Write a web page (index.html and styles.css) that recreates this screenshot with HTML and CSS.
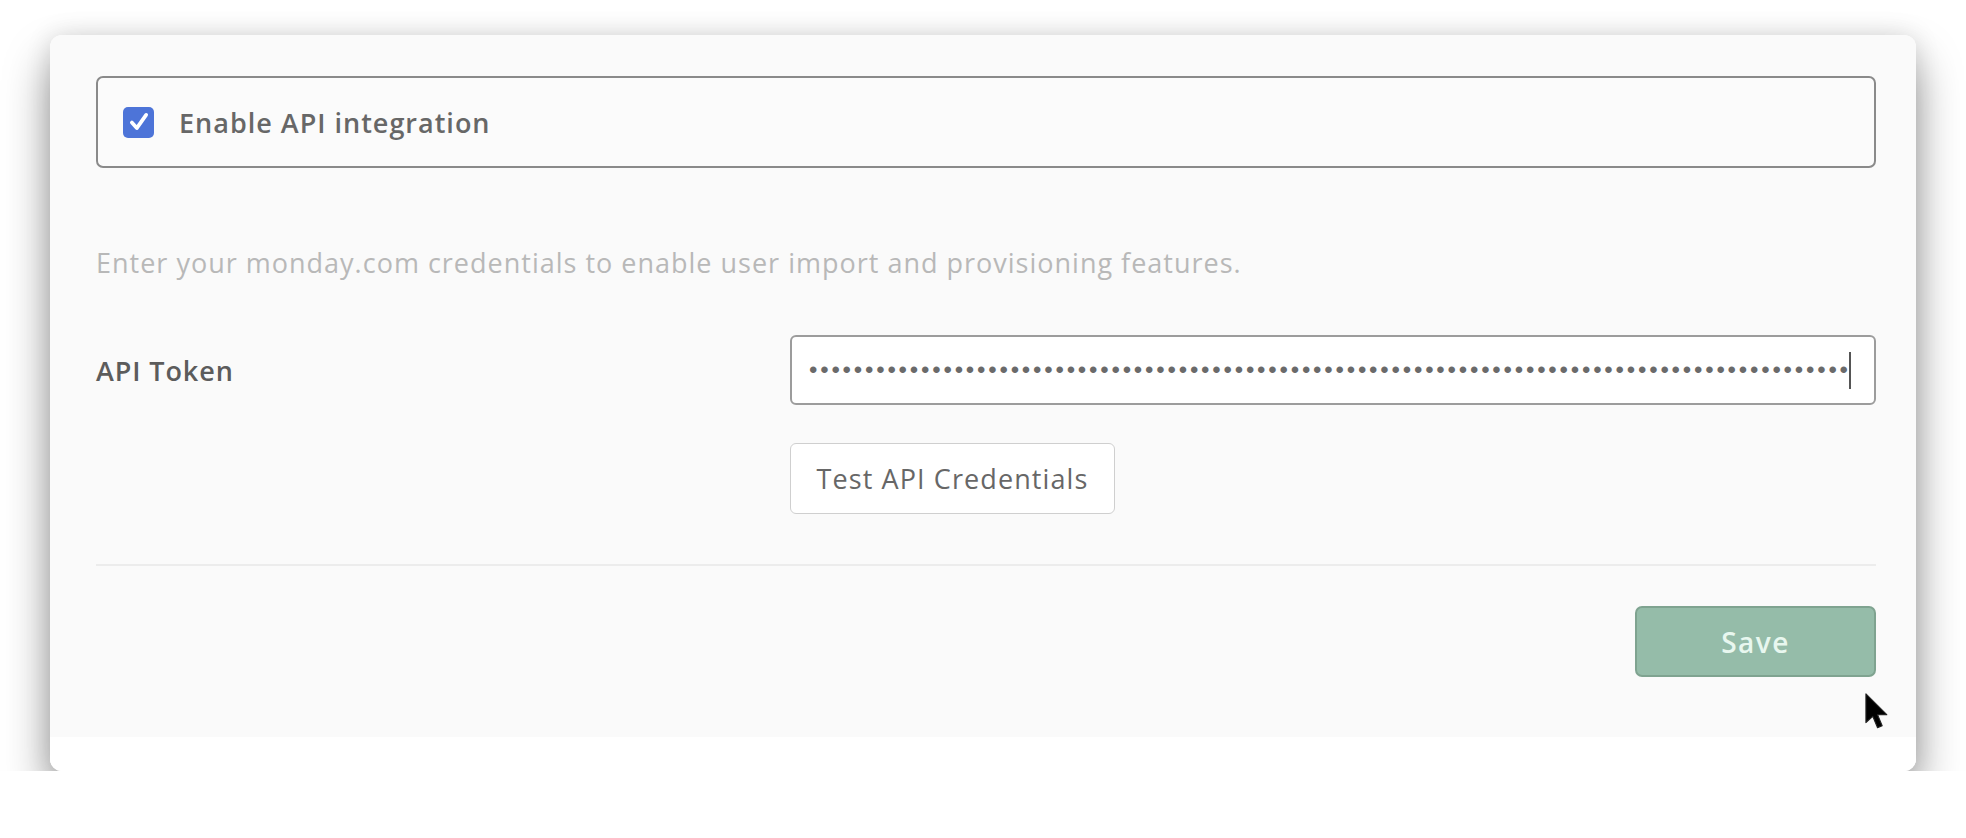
FILE: index.html
```html
<!DOCTYPE html>
<html lang="en">
<head>
    <meta charset="UTF-8">
    <title>API Integration Settings</title>
    <link rel="stylesheet" href="styles.css">
</head>
<body>
    <div class="card">
        <div class="card-body">
            <label class="enable-box">
                <span class="checkbox">
                    <svg width="22" height="22" viewBox="0 0 20 20" fill="none" stroke="#fff" stroke-width="3.4" stroke-linecap="round" stroke-linejoin="round">
                        <polyline points="3.5 10.5 8 15.5 16.5 3.5"></polyline>
                    </svg>
                </span>
                <span class="enable-label">Enable API integration</span>
            </label>

            <p class="hint">Enter your monday.com credentials to enable user import and provisioning features.</p>

            <div class="form-row">
                <div class="field-label">API Token</div>
                <div class="field-col">
                    <div class="field">
                        <span class="dots" id="dots"></span><span class="caret"></span>
                    </div>
                    <button class="btn-secondary">Test API Credentials</button>
                </div>
            </div>

            <div class="divider"></div>

            <div class="actions">
                <button class="btn-save">Save</button>
            </div>
        </div>
        <div class="card-foot"></div>

        <svg class="pointer" width="24" height="37" viewBox="0 0 13 20">
            <path d="M0.5 0.5 L0.5 16 L4.2 12.6 L6.8 18.8 L9.3 17.7 L6.8 11.7 L11.8 11.7 Z" fill="#000" stroke="#222" stroke-width="0.6" stroke-linejoin="round"></path>
        </svg>
    </div>

    <script src="script.js"></script>
</body>
</html>
```

FILE: styles.css
```css
body {
    margin: 0;
    background: #fff;
    font-family: "Open Sans", Lato, Arial, sans-serif;
}
.card {
    position: relative;
    margin: 35px 50px 0;
    border-radius: 12px;
    background: #fff;
    overflow: hidden;
    box-shadow: 0 26px 46px rgba(0, 0, 0, 0.4), 0 0 26px rgba(0, 0, 0, 0.12);
}
.card-body {
    background: #fafafa;
    padding: 41px 40px 60px 46px;
}
.card-foot {
    height: 34px;
    background: #fff;
}
.enable-box {
    display: flex;
    align-items: center;
    gap: 25px;
    height: 88px;
    padding-left: 25px;
    border: 2px solid #8a8a8a;
    border-radius: 7px;
    background: #fbfbfb;
}
.checkbox {
    width: 31px;
    height: 31px;
    border-radius: 5px;
    background: #4d74d8;
    display: flex;
    align-items: center;
    justify-content: center;
}
.enable-label {
    font-size: 27px;
    font-weight: 600;
    letter-spacing: 1px;
    color: #676767;
}
.hint {
    margin: 77px 0 0;
    font-size: 27px;
    line-height: 36px;
    letter-spacing: 1px;
    color: #b8b8b8;
}
.form-row {
    display: grid;
    grid-template-columns: 694px 1fr;
    margin-top: 54px;
}
.field-label {
    height: 70px;
    display: flex;
    align-items: center;
    font-size: 27px;
    font-weight: 600;
    letter-spacing: 0.9px;
    color: #5c5c5c;
}
.field {
    height: 66px;
    display: flex;
    align-items: center;
    padding-left: 17px;
    border: 2px solid #9c9c9c;
    border-radius: 6px;
    background: #fff;
    overflow: hidden;
}
.dots {
    font-family: "Liberation Sans", Arial, sans-serif;
    font-size: 24px;
    letter-spacing: 2.8px;
    color: #6a6a6a;
    white-space: nowrap;
}
.caret {
    display: inline-block;
    width: 2px;
    height: 37px;
    margin-left: -2px;
    background: #555;
}
.btn-secondary {
    display: block;
    margin-top: 38px;
    width: 325px;
    height: 71px;
    border: 1.5px solid #cfcfcf;
    border-radius: 6px;
    background: #fff;
    font-family: inherit;
    font-size: 27px;
    letter-spacing: 1.1px;
    color: #676767;
}
.divider {
    height: 2px;
    margin-top: 50px;
    background: #ececec;
}
.actions {
    display: flex;
    justify-content: flex-end;
    margin-top: 40px;
}
.btn-save {
    width: 241px;
    height: 71px;
    border: 2px solid #7fa390;
    border-radius: 7px;
    background: #95bca9;
    font-family: inherit;
    font-size: 28px;
    font-weight: 600;
    letter-spacing: 1.5px;
    color: #e8f7ef;
}
.pointer {
    position: absolute;
    left: 1815px;
    top: 658px;
}
```

FILE: script.js
```js
// fill the masked token
document.getElementById('dots').textContent = '•'.repeat(93);
```
